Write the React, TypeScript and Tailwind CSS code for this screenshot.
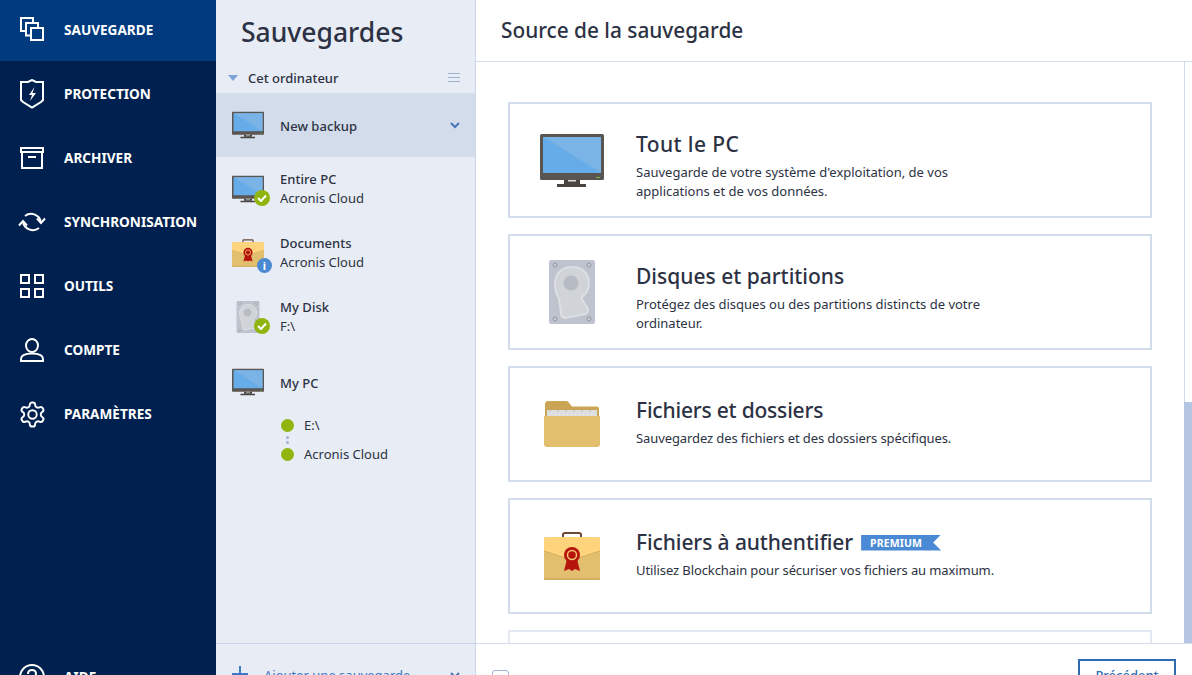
import React from "react";

const Monitor = ({ w, h }: { w: number; h: number }) => (
  <svg width={w} height={h} viewBox="0 0 64 53" className="shrink-0">
    <rect x="0" y="0" width="64" height="46" rx="1.5" fill="#5a5551" />
    <rect x="3" y="3" width="58" height="36" fill="#66ace8" />
    <polygon points="4,3 61,3 61,39" fill="#7ab3e5" />
    <rect x="56" y="43" width="4" height="1" fill="#7fb03a" />
    <rect x="24" y="46" width="16" height="4" fill="#4a4541" />
    <rect x="28" y="46" width="8" height="1.5" fill="#ddd" />
    <rect x="17" y="50" width="29" height="3" fill="#4a4541" />
  </svg>
);

const Disk = ({ w, h }: { w: number; h: number }) => (
  <svg width={w} height={h} viewBox="0 0 46 64" className="shrink-0">
    <rect width="46" height="64" rx="2" fill="#bec3cd" />
    <path d="M23 7C11 7 6 15 6 25C6 31 8 35 10 39L12 53C12 56 14 58 17 58L36 54C39 53 39.500 50 38.500 48L32 38C37 34 40 30 40 24C40 14 34 7 23 7Z" fill="#d0d4d8" stroke="#dcdfe3" strokeWidth="2" />
    <circle cx="22" cy="23" r="7.500" fill="#b7bbc4" />
    {[[6, 5], [40, 5], [6, 59], [40, 59]].map(([x, y]) => (
      <circle key={x + "-" + y} cx={x} cy={y} r="2" fill="#c9ccd2" stroke="#85898f" strokeWidth="0.8" />
    ))}
  </svg>
);

const Folder = () => (
  <svg width="56" height="46" viewBox="0 0 56 46" className="shrink-0">
    <path d="M1 16V3C1 1.500 2 0 4 0H22C24 0 24.500 1 26 3C27 5 28 5.500 30 5.500H53C54.500 5.500 55 6.500 55 8V16Z" fill="#c9a554" />
    <rect x="3" y="9" width="50" height="7" fill="#dedfe0" />
    <path d="M6 9V11M14 9V11M22 9V11M30 9V11M38 9V11M46 9V11" stroke="#b9b9b9" strokeWidth="1" />
    <path d="M0 15H56V43C56 45 55 46 53 46H3C1 46 0 45 0 43Z" fill="#e2bf6f" />
  </svg>
);

const Brief = ({ w, h }: { w: number; h: number }) => (
  <svg width={w} height={h} viewBox="0 0 56 48" className="shrink-0">
    <path d="M19 5V2.500C19 1 20 1 21 1H35C36 1 37 1 37 2.500V5" fill="none" stroke="#6b4a3a" strokeWidth="2" />
    <rect y="5" width="56" height="43" rx="2" fill="#e2bf6f" />
    <path d="M0 7C0 6 1 5 2 5H54C55 5 56 6 56 7V19L28 28L0 19Z" fill="#fdd37c" />
    <path d="M0 19L28 28L56 19" fill="none" stroke="#d2ae5f" strokeWidth="1" />
    <path d="M23 27L20 39L25 37L28 39L31 37L36 39L33 27Z" fill="#b5130c" />
    <circle cx="28" cy="23" r="8" fill="#b5130c" />
    <circle cx="28" cy="23" r="4.500" fill="#b5130c" stroke="#f2c66f" strokeWidth="1.500" />
    <rect y="46" width="56" height="2" rx="1" fill="#d2ae5f" />
  </svg>
);

const Check = () => (
  <span className="absolute left-[22px] top-[17px] flex h-[16px] w-[16px] items-center justify-center rounded-full bg-[#8fb50e]">
    <svg width="10" height="8" viewBox="0 0 10 8"><path d="M1 4L4 7L9 1.500" fill="none" stroke="#fff" strokeWidth="2" /></svg>
  </span>
);

const stroke = { fill: "none", stroke: "#fff", strokeWidth: 2 };

const navIcons: Record<string, React.ReactNode> = {
  SAUVEGARDE: (
    <svg width="24" height="24" viewBox="0 0 24 24" {...stroke} className="-mt-[3px]">
      <path d="M6 14H1V1H13V6" />
      <path d="M11 18.500H6V6H18V11" />
      <rect x="11" y="11" width="12" height="12" />
    </svg>
  ),
  PROTECTION: (
    <svg width="26" height="30" viewBox="0 0 26 30" {...stroke}>
      <path d="M2 3H5L9 3L13 1L17 3H21L24 3V21L22 23L13 28.500L4 23L2 21Z" />
      <path d="M15.500 8L10 16H13L11 22L17 14H13.500Z" fill="#fff" stroke="none" />
    </svg>
  ),
  ARCHIVER: (
    <svg width="24" height="22" viewBox="0 0 24 22" {...stroke}>
      <rect x="1" y="1" width="22" height="4" />
      <path d="M2 5V21H22V5" />
      <path d="M8 10H16" />
    </svg>
  ),
  SYNCHRONISATION: (
    <svg width="28" height="22" viewBox="0 0 28 22" {...stroke}>
      <path d="M7 5A10 10 0 0 1 23 11.500" />
      <path d="M5 10.500A10 10 0 0 0 21 17" />
      <path d="M1 14.500L5 10L9 14.500" />
      <path d="M19 7.500L23 12L27 7.500" />
    </svg>
  ),
  OUTILS: (
    <svg width="24" height="24" viewBox="0 0 24 24" {...stroke}>
      <rect x="1" y="1" width="8" height="8" />
      <rect x="15" y="1" width="8" height="8" />
      <rect x="1" y="15" width="8" height="8" />
      <rect x="15" y="15" width="8" height="8" />
    </svg>
  ),
  COMPTE: (
    <svg width="24" height="24" viewBox="0 0 24 24" {...stroke}>
      <ellipse cx="12" cy="7.500" rx="6" ry="6.500" />
      <path d="M1 23V21C1 17 5.500 15.500 12 15.500C18.500 15.500 23 17 23 21V23Z" />
    </svg>
  ),
  "PARAMÈTRES": (
    <svg width="29" height="29" viewBox="0 0 24 24" fill="none" stroke="#fff" strokeWidth="1.600">
      <path d="M12.220 2h-.44a2 2 0 0 0-2 2v.18a2 2 0 0 1-1 1.730l-.43.25a2 2 0 0 1-2 0l-.15-.08a2 2 0 0 0-2.730.730l-.22.380a2 2 0 0 0 .730 2.730l.15.100a2 2 0 0 1 1 1.720v.510a2 2 0 0 1-1 1.740l-.15.090a2 2 0 0 0-.730 2.730l.22.380a2 2 0 0 0 2.730.730l.15-.08a2 2 0 0 1 2 0l.43.250a2 2 0 0 1 1 1.730V20a2 2 0 0 0 2 2h.44a2 2 0 0 0 2-2v-.18a2 2 0 0 1 1-1.730l.43-.25a2 2 0 0 1 2 0l.15.080a2 2 0 0 0 2.730-.730l.22-.390a2 2 0 0 0-.730-2.730l-.15-.080a2 2 0 0 1-1-1.740v-.5a2 2 0 0 1 1-1.740l.15-.090a2 2 0 0 0 .730-2.730l-.22-.380a2 2 0 0 0-2.730-.730l-.15.080a2 2 0 0 1-2 0l-.43-.250a2 2 0 0 1-1-1.730V4a2 2 0 0 0-2-2z" />
      <circle cx="12" cy="12" r="3.500" />
    </svg>
  ),
};

const NavItem = ({ label, active }: { label: string; active?: boolean }) => (
  <div className={active ? "flex h-[61px] items-center bg-[#023a7e] mb-px" : "flex h-16 items-center"}>
    <div className="flex w-[64px] shrink-0 justify-center">{navIcons[label]}</div>
    <span className="text-[13.600px] font-bold text-white">{label}</span>
  </div>
);

const Card = ({ icon, title, badge, single, titleTrack, children }: { icon: React.ReactNode; title: string; badge?: boolean; single?: boolean; titleTrack?: string; children: React.ReactNode }) => (
  <div className="flex h-[116px] shrink-0 items-start border-2 border-[#d2dcea] bg-white">
    <div className="flex h-full w-[124px] shrink-0 items-center justify-center">{icon}</div>
    <div className={single ? "ml-[2px] mt-[27px] w-[370px] shrink-0" : "ml-[2px] mt-[25px] w-[370px] shrink-0"}>
      <div className="flex items-center whitespace-nowrap text-[21px] leading-[30px] font-medium text-[#2c3243]">
        <span className={titleTrack}>{title}</span>
        {badge && (
          <span className="ml-[8px] mt-[1px] flex h-[16px] w-[80px] items-center bg-[#4a8ad4] pl-[9px] text-[10.500px] font-bold tracking-[0.1px] text-white [clip-path:polygon(0_0,100%_0,90%_50%,100%_100%,0_100%)]">
            PREMIUM
          </span>
        )}
      </div>
      <div className={single ? "mt-[4px] text-[13px] leading-[19px] tracking-[-0.1px] text-[#2c3243]" : "mt-[4px] text-[13px] leading-[19px] text-[#2c3243]"}>{children}</div>
    </div>
  </div>
);

const BackupRow = ({ icon, title, sub, active, chevron }: { icon: React.ReactNode; title: string; sub?: string; active?: boolean; chevron?: boolean }) => (
  <div className={active ? "flex h-[64px] items-center bg-[#d2dcea] pl-[16px] pr-[15px]" : "flex h-[64px] items-center pl-[16px] pr-[15px]"}>
    <div className="relative flex h-[32px] w-[32px] shrink-0 items-center justify-center">{icon}</div>
    <div className={sub ? "ml-[16px] flex-1 text-[13px] leading-[19px] text-[#2c3243]" : "ml-[16px] flex-1 pt-[3px] text-[13px] leading-[19px] text-[#2c3243]"}>
      <div className="font-medium tracking-[0.05px]">{title}</div>
      {sub && <div>{sub}</div>}
    </div>
    {chevron && (
      <svg width="10" height="7" viewBox="0 0 10 7"><path d="M1 1L5 5L9 1" fill="none" stroke="#4a76b5" strokeWidth="2" /></svg>
    )}
  </div>
);

export default function App() {
  return (
    <div className="flex h-[675px] w-[1192px] overflow-hidden bg-white font-['Noto_Sans','Open_Sans',sans-serif]">
      <aside className="flex w-[216px] shrink-0 flex-col bg-[#00214f]">
        <NavItem label="SAUVEGARDE" active />
        {["PROTECTION", "ARCHIVER", "SYNCHRONISATION", "OUTILS", "COMPTE", "PARAMÈTRES"].map((l) => (
          <NavItem key={l} label={l} />
        ))}
        <div className="mt-auto -mb-[34px] flex h-16 shrink-0 items-center">
          <div className="flex w-[64px] shrink-0 justify-center">
            <svg width="26" height="26" viewBox="0 0 26 26" fill="none" stroke="#fff" strokeWidth="2">
              <circle cx="13" cy="13" r="12" />
              <path d="M9 10C9 7 11 6 13 6C15 6 17 7 17 10C17 13 13 13 13 16" />
            </svg>
          </div>
          <span className="text-[13.600px] font-bold text-white">AIDE</span>
        </div>
      </aside>

      <section className="flex w-[260px] shrink-0 flex-col border-r border-[#c9d5e8] bg-[#e8ecf5]">
        <h1 className="h-[62px] shrink-0 pl-[25px] pt-[12px] text-[26.500px] leading-[40px] font-medium text-[#2c3243]">Sauvegardes</h1>
        <div className="flex h-[31px] shrink-0 items-center pl-[12px] pr-[15px]">
          <svg width="10" height="6" viewBox="0 0 10 6"><path d="M0 0H10L5 6Z" fill="#7fa3d9" /></svg>
          <span className="ml-[10px] flex-1 pt-[2px] text-[13px] font-medium text-[#2c3243]">Cet ordinateur</span>
          <svg width="12" height="9" viewBox="0 0 12 9" stroke="#9fb2cf"><path d="M0 .5H12M0 4.500H12M0 8.500H12" /></svg>
        </div>
        <BackupRow active chevron title="New backup" icon={<Monitor w={32} h={28} />} />
        <BackupRow title="Entire PC" sub="Acronis Cloud" icon={<><Monitor w={32} h={28} /><Check /></>} />
        <BackupRow title="Documents" sub="Acronis Cloud" icon={<><Brief w={32} h={28} /><span className="absolute left-[25px] top-[21px] flex h-[15px] w-[15px] items-center justify-center rounded-full bg-[#4a8ad4] text-[11px] leading-none font-bold text-white">i</span></>} />
        <BackupRow title="My Disk" sub="F:\" icon={<><Disk w={24} h={32} /><Check /></>} />
        <div className="mt-px">
          <BackupRow title="My PC" icon={<Monitor w={32} h={28} />} />
        </div>
        <div className="-mt-[3px] flex pl-[65px] text-[13px] text-[#2c3243]">
          <div className="flex flex-col items-center pt-[8px]">
            <span className="h-[13px] w-[13px] rounded-full bg-[#8fb50e]" />
            <span className="mt-[4px] h-[3px] w-[3px] rounded-full bg-[#9fb2d6]" />
            <span className="mt-[2px] h-[3px] w-[3px] rounded-full bg-[#9fb2d6]" />
            <span className="mt-[4px] h-[13px] w-[13px] rounded-full bg-[#8fb50e]" />
          </div>
          <div className="ml-[10px] leading-[29px]">
            <div>E:\</div>
            <div>Acronis Cloud</div>
          </div>
        </div>
        <div className="mt-auto -mb-[32px] flex h-[64px] shrink-0 items-center border-t border-[#c9d5e8] pl-[16px] pr-[15px]">
          <svg width="16" height="16" viewBox="0 0 16 16" stroke="#3f78c4" strokeWidth="2" className="-translate-y-[2px]"><path d="M8 0V16M0 8H16" /></svg>
          <span className="ml-[16px] flex-1 text-[13px] text-[#3f78c4]">Ajouter une sauvegarde</span>
          <svg width="10" height="7" viewBox="0 0 10 7"><path d="M1 1L5 5L9 1" fill="none" stroke="#4a76b5" strokeWidth="2" /></svg>
        </div>
      </section>

      <main className="flex min-w-0 flex-1 flex-col">
        <header className="flex h-[62px] shrink-0 items-center border-b border-[#d2dcea] pl-[25px] pt-[1px] text-[20.800px] font-medium text-[#2c3243]">Source de la sauvegarde</header>
        <div className="flex min-h-0 flex-1">
          <div className="flex min-w-0 flex-1 flex-col gap-[16px] overflow-hidden pl-[32px] pr-[32px] pt-[40px]">
            <Card title="Tout le PC" titleTrack="tracking-[0.4px]" icon={<Monitor w={64} h={53} />}>
              Sauvegarde de votre système d'exploitation, de vos applications et de vos données.
            </Card>
            <Card title="Disques et partitions" icon={<Disk w={46} h={64} />}>
              Protégez des disques ou des partitions distincts de votre ordinateur.
            </Card>
            <Card single title="Fichiers et dossiers" titleTrack="tracking-[-0.2px]" icon={<Folder />}>
              Sauvegardez des fichiers et des dossiers spécifiques.
            </Card>
            <Card single title="Fichiers à authentifier" titleTrack="tracking-[-0.1px]" badge icon={<Brief w={56} h={48} />}>
              Utilisez Blockchain pour sécuriser vos fichiers au maximum.
            </Card>
            <div className="h-[116px] shrink-0 border-2 border-[#e3e9f2]" />
          </div>
          <div className="flex w-[8px] shrink-0 flex-col border-l border-[#d2dcea]">
            <div className="-ml-px mt-[340px] flex-1 bg-[#b3c5e0]" />
          </div>
        </div>
        <footer className="-mb-[32px] flex h-[64px] shrink-0 items-start justify-between border-t border-[#d2dcea] pl-[16px] pr-[16px]">
          <span className="mt-[26px] h-[17px] w-[17px] rounded-[3px] border border-[#9fb2cf]" />
          <span className="mt-[15px] flex h-[34px] w-[98px] items-center justify-center border-2 border-[#2f6bb0] text-[13px] font-medium text-[#2f6bb0]">Précédent</span>
        </footer>
      </main>
    </div>
  );
}
